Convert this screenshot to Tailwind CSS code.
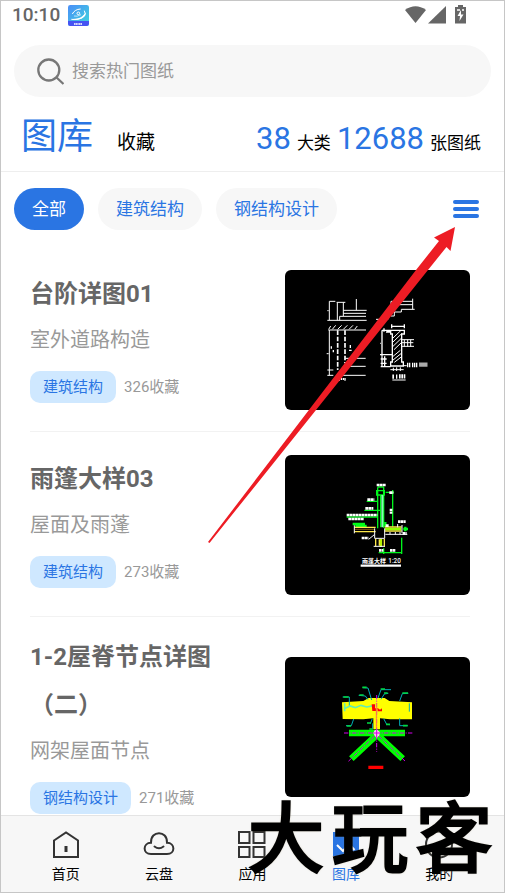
<!DOCTYPE html>
<html lang="zh-CN">
<head>
<meta charset="utf-8">
<meta name="viewport" content="width=device-width, initial-scale=1">
<title>图库</title>
<script src="https://cdn.jsdelivr.net/npm/@tailwindcss/browser@4"></script>
</head>
<body class="font-['Roboto','Noto_Sans_CJK_SC',sans-serif] bg-white text-black">
<div class="relative flex h-screen flex-col overflow-hidden border border-[#c6c6c6]">

  <!-- Status bar -->
  <div class="flex h-7 shrink-0 items-center pl-[11px] pr-[37px] text-[#666]">
    <span class="text-[19px] font-medium leading-7">10:10</span>
    <svg class="ml-2 h-[21px] w-[21px]" viewBox="0 0 63 63" aria-hidden="true">
      <defs><linearGradient id="app" x1="0" y1="0" x2="1" y2="1"><stop offset="0" stop-color="#4a8df8"/><stop offset="1" stop-color="#3fd8dc"/></linearGradient>
      <clipPath id="appclip"><rect width="63" height="63" rx="7"/></clipPath></defs>
      <g clip-path="url(#appclip)"><rect width="63" height="63" fill="url(#app)"/><rect y="48" width="63" height="15" fill="#4653f2"/></g>
      <path d="M13 27Q20 13 38 12M49 17Q56 26 45 36Q33 46 10 43" fill="none" stroke="#fff" stroke-width="3"/>
      <path d="M11 42C32 43 46 35 53 22C57 38 32 49 11 42Z" fill="#fff"/>
      <circle cx="31" cy="25" r="4" fill="none" stroke="#fff" stroke-width="3"/><path d="M18 33Q27 36 39 29" fill="none" stroke="#fff" stroke-width="2"/>
      <path d="M18 57H43" stroke="#fff" stroke-width="5" stroke-dasharray="4 1"/>
    </svg>
    <svg class="ml-auto h-5 w-[62px]" viewBox="0 0 62 20" fill="#666" aria-hidden="true">
      <path d="M0 5Q10.500-2.500 21 5L10.500 18Z"/>
      <path d="M23 18.500L41 1V18.500Z"/>
      <path d="M50 2H53V0H58V2H61V18.500H50Z"/>
      <path d="M52 5H55M57 5H59" stroke="#fff" stroke-width="1.500"/><path d="M56 5L52.500 11H55L54.500 16L58.500 9.500H56Z" fill="#fff"/>
    </svg>
  </div>

  <!-- Search -->
  <label class="mt-4 mr-[13px] ml-[13px] flex h-[52px] shrink-0 items-center rounded-full bg-[#f7f7f7] pl-[23px]">
    <svg class="h-[27px] w-[27px] shrink-0" viewBox="0 0 27 27" fill="none" stroke="#777" stroke-width="2.300" aria-hidden="true"><circle cx="11.800" cy="12" r="10.500"/><path d="M19 19L26.500 26"/></svg>
    <input type="search" aria-label="搜索" placeholder="搜索热门图纸" class="ml-2 min-w-0 flex-1 bg-transparent pt-0.5 text-[17px] text-[#666] outline-none placeholder:text-[#999]">
  </label>

  <!-- Section tabs and totals -->
  <header class="flex h-[75px] shrink-0 items-baseline border-b border-[#eee] pt-3 pr-[23px] pl-5">
    <a href="#library" class="text-4xl leading-[56px] text-[#2a75e3]">图库</a>
    <a href="#favorites" class="ml-6 text-[19px]">收藏</a>
    <p class="ml-auto flex items-baseline gap-1.5 text-[17px]">
      <span class="text-[31px] leading-10 text-[#2a75e3]">38</span><span>大类</span>
      <span class="text-[31px] leading-10 text-[#2a75e3]">12688</span><span>张图纸</span>
    </p>
  </header>

  <!-- Category filter -->
  <div class="flex shrink-0 items-center gap-[14px] pt-4 pr-[25px] pl-[13px] text-[17px] text-[#2a75e3]">
    <button class="h-[42px] rounded-full bg-[#2a75e3] px-[18px] pt-0.5 text-white">全部</button>
    <button class="h-[42px] rounded-full bg-[#f7f7f7] px-[18px] pt-0.5">建筑结构</button>
    <button class="h-[42px] rounded-full bg-[#f7f7f7] px-[18px] pt-0.5">钢结构设计</button>
    <button aria-label="全部分类" class="ml-auto flex w-[26px] flex-col gap-[3px]">
      <span class="h-1 rounded-full bg-[#2a75e3]"></span><span class="h-1 rounded-full bg-[#2a75e3]"></span><span class="h-1 rounded-full bg-[#2a75e3]"></span>
    </button>
  </div>

  <!-- Drawing list -->
  <main class="min-h-0 flex-1 overflow-hidden pt-[17px] pr-[34px] pl-[29px]">
    <article class="flex items-center gap-4 border-b border-[#f2f2f2] pt-4 pb-[14px]">
      <div class="min-w-0 flex-1 pb-[7px]">
        <h2 class="text-2xl leading-[48px] font-bold text-[#666]">台阶详图01</h2>
        <p class="text-xl leading-[44px] text-[#999]">室外道路构造</p>
        <p class="mt-[9px] flex items-center gap-2 text-[15px] leading-8 text-[#999]"><span class="rounded-[10px] bg-[#cfe8ff] px-[13px] text-[#2a75e3]">建筑结构</span>326收藏</p>
      </div>
      <svg class="my-[7px] h-[140px] w-[185px] shrink-0 rounded-md bg-black" viewBox="15 30 555 420" role="img" aria-label="台阶详图01" fill="none" stroke="#fff" stroke-width="3">
        <path d="M148 124V180M148 124H166M142 181H260M170 127H196M172 127V181M190 127V168M179 169H258M179 169V181M229 117V151M190 151H260M190 160H258M142 152H146"/>
        <path d="M145 210H258M148 210V346M142 346H160M185 346H257M140 281H146M142 330H160M196 295H257M200 319H257"/>
        <path d="M146 208L152 198M157 208L167 196M173 208L185 196M190 208L202 196M207 208L219 196M224 208L232 198"/>
        <path d="M173 211V330M195 211V310" stroke-width="5" stroke-dasharray="14 5"/>
        <path d="M154 259V266M160 270V277M211 255V264M207 271H215M178 356V362M184 354V360M190 354V360M195 354V362" stroke-width="4"/>
        <path d="M333 124H398M333 134H398M398 116V148M364 148H404M364 148V156H343V168H333M333 124V150M288 178H324V170"/>
        <path d="M335 193V205M373 193V205M335 199H373M332 211H373V222H365V306H370V318H332V306H337V222H332ZM337 211H365M306 211V289M306 211H330M300 250H302" stroke-width="4"/>
        <path d="M338 235L363 211M338 247L365 221M338 260L365 234M342 269L365 247M338 290L361 271M338 301L364 280M343 307L365 290"/>
        <path d="M312 205V215M300 284H337M306 289V322M314 289V322M302 297H320M302 310H320M302 320H332M321 212H332M318 216H332" stroke-width="4"/>
        <path d="M365 239H402M365 248H400M365 259H402M373 239V260M383 239V260M392 239V260"/>
        <path d="M371 317H380M331 329H371M340 323V333M350 322V333M361 322V333M337 360H377"/>
        <path d="M381 315H392M396 315H414M418 314H443" stroke-width="13" stroke-dasharray="4 2"/>
        <path d="M337 350H342M348 350H352M357 349H377" stroke-width="13" stroke-dasharray="5 2"/>
      </svg>
    </article>

    <article class="flex items-center gap-4 border-b border-[#f2f2f2] pt-4 pb-[14px]">
      <div class="min-w-0 flex-1 pb-[7px]">
        <h2 class="text-2xl leading-[48px] font-bold text-[#666]">雨篷大样03</h2>
        <p class="text-xl leading-[44px] text-[#999]">屋面及雨蓬</p>
        <p class="mt-[9px] flex items-center gap-2 text-[15px] leading-8 text-[#999]"><span class="rounded-[10px] bg-[#cfe8ff] px-[13px] text-[#2a75e3]">建筑结构</span>273收藏</p>
      </div>
      <svg class="my-[7px] h-[140px] w-[185px] shrink-0 rounded-md bg-black" viewBox="15 30 555 420" role="img" aria-label="雨篷大样03" fill="none" stroke-width="3">
        <path d="M290 137H313V150H290ZM293 127V250M302 150V247M311 125V248M317 142H342M338 135V245M260 169H293M253 196H302M200 216H293M296 323H365M311 310V327M365 278V327M293 126H311" stroke="#00f51c" stroke-width="4"/>
        <path d="M307 150V247" stroke="#82ffb0" stroke-width="6"/>
        <path d="M218 237H255M226 243H260M316 231V245" stroke="#00ff18" stroke-width="7"/>
        <path d="M223 247H287M223 260H287M314 246H365M314 258H365M287 281V304M313 281V304M298 283V302" stroke="#ffe94a" stroke-width="4"/>
        <path d="M225 253H285" stroke="#6b4a10" stroke-width="4"/>
        <path d="M315 252H364" stroke="#95ff00" stroke-width="8"/><path d="M303 282V306" stroke="#b7f500" stroke-width="7"/>
        <path d="M223 241V265M284 250V280H314V250M366 240V264M281 304H315M266 283L283 269M353 237V247M316 268H382M330 261V268M346 261V268M360 261V268" stroke="#fff"/>
        <path d="M370 252H384M376 245V259" stroke="#00ff18" stroke-width="7"/>
        <g stroke="#fff" stroke-width="8" stroke-dasharray="8 1"><path d="M290 120H318M328 143H340M262 164H283M256 190H280M200 210H292M205 222H252M245 279H265M354 230H377M368 265H380M297 316H310M330 316H346M333 191V206M317 242H327"/></g>
        <text x="246" y="355" fill="#fff" stroke="none" font-size="18" font-weight="700" font-family="'Noto Sans CJK SC',sans-serif">雨蓬大样</text>
        <text x="325" y="355" fill="#fff" stroke="none" font-size="19" font-weight="500" font-family="Roboto,sans-serif">1:20</text>
        <path d="M242 362H363" stroke="#fff" stroke-width="7"/>
      </svg>
    </article>

    <article class="flex items-center gap-4 border-b border-[#f2f2f2] pt-4 pb-[14px]">
      <div class="min-w-0 flex-1 pb-[7px]">
        <h2 class="text-2xl leading-[48px] font-bold text-[#666]">1-2屋脊节点详图（二）</h2>
        <p class="text-xl leading-[44px] text-[#999]">网架屋面节点</p>
        <p class="mt-[9px] flex items-center gap-2 text-[15px] leading-8 text-[#999]"><span class="rounded-[10px] bg-[#cfe8ff] px-[13px] text-[#2a75e3]">钢结构设计</span>271收藏</p>
      </div>
      <svg class="my-[7px] h-[140px] w-[185px] shrink-0 rounded-md bg-black" viewBox="15 21 555 420" role="img" aria-label="1-2屋脊节点详图（二）" fill="none">
        <path d="M186 157L250 153L266 144H314L328 153L396 157V208L330 208L300 205V238H280V205L250 208L188 207Z" fill="#ff0"/>
        <path d="M207 249H375M288 257L214 326M294 257L368 326" stroke="#0f0" stroke-width="20"/>
        <path d="M188 141H208V168M248 113L264 114L275 150M236 136L256 138L264 149M333 119H303L294 144M325 130L313 132L303 148M385 130L367 131L359 153M359 205V227H383M221 207L214 227H198M277 206L271 221M311 206L320 223L330 224M278 220V238M388 160V185" stroke="#00aeb8" stroke-width="3"/>
        <path d="M193 176L210 168L226 173L243 166L260 171L286 166M194 160V184" stroke="#65edb0" stroke-width="5"/>
        <path d="M190 141H206M247 112H260M238 135H251M302 117H315M312 129H323M367 129H384M369 227H383M200 228H213M261 219H273M318 223H330M268 237H278" stroke="#00d943" stroke-width="5"/>
        <path d="M275 163H285V175H290V183H277ZM292 173L300 179L306 175V184H293Z" fill="#f00"/>
        <path d="M290 135V305M192 249H398M284 258L204 335M296 258L377 335" stroke="#d000e8" stroke-width="3" stroke-dasharray="13 4 3 4"/>
        <path d="M289 160V236" stroke="#ff8040" stroke-width="3"/>
        <path d="M280 249L284 241L292 239L300 247L298 256L290 264L284 257Z" fill="#ffc7ed"/><path d="M280 249H300M290 239V263" stroke="#d000e8" stroke-width="3"/>
        <path d="M265 352H310" stroke="#f00" stroke-width="10"/>
      </svg>
    </article>
  </main>

  <!-- Bottom navigation -->
  <nav class="grid h-[77px] shrink-0 grid-cols-5 border-t border-[#e4e4e4] bg-[#f7f7f7] px-[18px] pt-[14px] text-sm">
    <a href="#home" class="flex flex-col items-center gap-1">
      <svg class="h-[30px] w-8" viewBox="0 0 32 30" fill="none" stroke="#333" stroke-width="2" aria-hidden="true"><path d="M4 10.500L16 2.500L28 10.500V27H4Z"/><path d="M16 16V22" stroke-width="3"/></svg>首页</a>
    <a href="#cloud" class="flex flex-col items-center gap-1">
      <svg class="h-[30px] w-8" viewBox="0 0 32 30" fill="none" stroke="#333" stroke-width="2" stroke-linecap="round" aria-hidden="true"><path d="M8 24C-0.500 24-0.500 13 8 12.700C7.500 0 24.500 0 24 12.700C32.500 13 32.500 24 24 24Z"/><path d="M11.500 16.500Q16 20 20.500 16.500"/></svg>云盘</a>
    <a href="#apps" class="flex flex-col items-center gap-1">
      <svg class="h-[30px] w-8" viewBox="0 0 32 30" fill="none" stroke="#333" stroke-width="2" aria-hidden="true"><path d="M3 2H13.500V13H3ZM17.500 2H28.500V13H17.500ZM3 17H13.500V27H3ZM17.500 17H28.500V27H17.500Z"/></svg>应用</a>
    <a href="#library" aria-current="page" class="flex flex-col items-center gap-1 text-[#2a75e3]">
      <svg class="h-[30px] w-8" viewBox="0 0 32 30" aria-hidden="true"><path d="M3 2H29V26H3Z" fill="#2a75e3"/><path d="M7 15L13 21L19 14L24.500 20" fill="none" stroke="#fff" stroke-width="2"/></svg>图库</a>
    <a href="#me" class="flex flex-col items-center gap-1">
      <svg class="h-[30px] w-8" viewBox="0 0 32 30" fill="none" stroke="#333" stroke-width="2" aria-hidden="true"><circle cx="16" cy="14.500" r="13"/><path d="M10 17Q16 23 22 17"/></svg>我的</a>
  </nav>

  <!-- Pointer towards the category menu -->
  <svg class="pointer-events-none absolute top-[226px] right-12 h-[317px] w-[248px]" viewBox="0 0 248 317" fill="#ed1c24" aria-hidden="true"><path d="M247 0L226 10.500L231 14L208 43L0 315L1.500 316L220 43L238.500 20L242.500 24Z"/></svg>

  <!-- Watermark -->
  <div class="pointer-events-none absolute right-3 bottom-2 flex gap-2 text-[76px] leading-[88px] text-black [text-shadow:0_0_3px_#a89868] [-webkit-text-stroke:3px_#000]"><span>大</span><span>玩</span><span>客</span></div>
</div>
</body>
</html>
